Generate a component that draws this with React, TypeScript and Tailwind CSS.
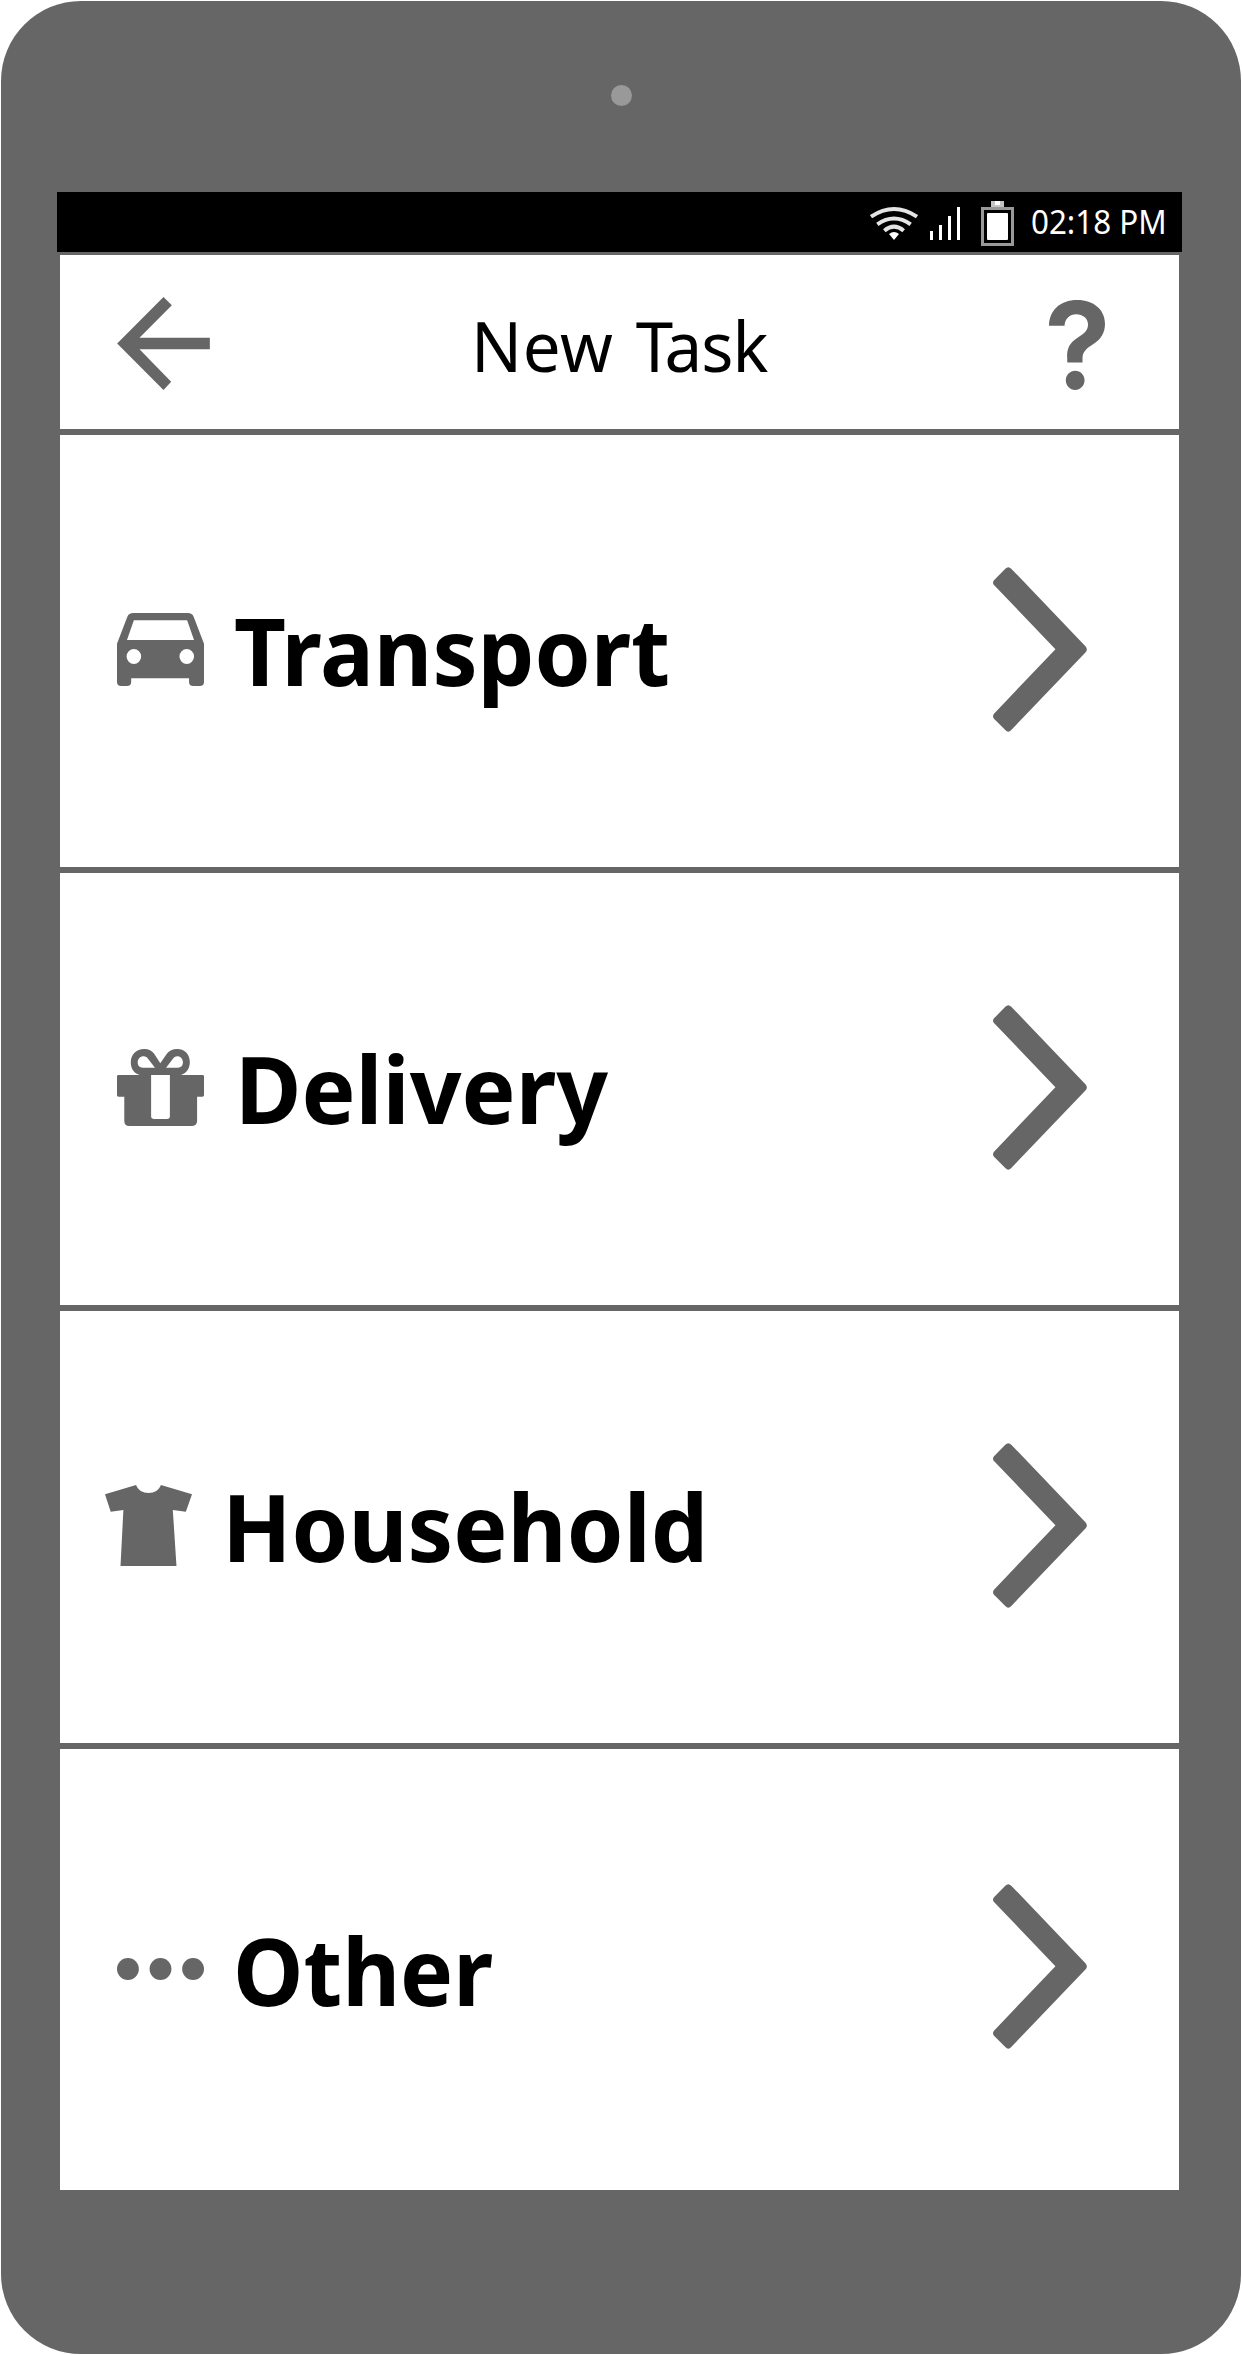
import type { ReactNode } from "react";
import { IoIosHelp } from "react-icons/io";

const CarIcon = () => (
  <svg viewBox="71 99 227 219" preserveAspectRatio="none" className="mt-[178px] h-[73px] w-[87px] shrink-0" fill="#666">
    <path
      fillRule="evenodd"
      d="M71 191L98 110Q102 99 113 99H256Q267 99 271 110L298 191V306Q298 318 287 318H270Q259 318 259 306V295H108V306Q108 318 97 318H82Q71 318 71 306ZM115 121L97 180H272L254 121ZM115 207A19 22.500 0 1 0 115 252A19 22.500 0 1 0 115 207ZM253 207A19 22.500 0 1 0 253 252A19 22.500 0 1 0 253 207Z"
    />
  </svg>
);

const GiftIcon = () => (
  <svg viewBox="71 87 227 231" preserveAspectRatio="none" className="mt-[176px] h-[77px] w-[87px] shrink-0" fill="#666">
    <path
      fillRule="evenodd"
      d="M75 165H130C113 159 107 144 107 127C107 104 121 87 142 87C154 87 162 92 168 101L184 130L201 101C207 92 216 87 228 87C249 87 261 104 261 127C261 144 254 159 238 165H294Q298 165 298 169V226Q298 230 294 230H280V303Q280 318 265 318H103Q90 318 90 303V230H75Q71 230 71 226V169Q71 165 75 165ZM160 165V289Q160 297 168 297H201Q209 297 209 289V165ZM170 143L152 116C148 111 145 109 141 109C131 109 125 117 125 127C125 137 130 143 138 143ZM199 143L217 116C221 111 224 109 228 109C237 109 243 117 243 127C243 137 238 143 230 143Z"
    />
  </svg>
);

const ShirtIcon = () => (
  <svg viewBox="37 75 213 243" preserveAspectRatio="none" className="mt-[174px] h-[81px] w-[87px] shrink-0" fill="#666">
    <path d="M37 103L113 75C118 91 129 99 144 99C158 99 169 91 174 75L250 103L235 155L203 150L212 318H75L82 150L51 155Z" />
  </svg>
);

const DotsIcon = () => (
  <svg viewBox="71 175 227 66" preserveAspectRatio="none" className="mt-[209px] h-[22px] w-[87px] shrink-0" fill="#666">
    <ellipse cx="99.500" cy="208" rx="28.500" ry="33" />
    <ellipse cx="184.500" cy="208" rx="28.500" ry="33" />
    <ellipse cx="269.500" cy="208" rx="28.500" ry="33" />
  </svg>
);

const Chevron = () => (
  <svg viewBox="158 82 283 494" preserveAspectRatio="none" className="h-[165px] w-[94px] shrink-0" fill="#666">
    <path d="M161 122L195 87Q204 78 213 87L437 320Q444 329 437 337L213 570Q204 580 195 570L161 536Q155 529 161 521L346 328L161 136Q155 129 161 122Z" />
  </svg>
);

const StatusBar = () => (
  <div className="flex h-[60px] w-[1125px] items-start bg-black pl-[813px]">
    <svg viewBox="90 72 144 108" className="mt-3 h-9 w-12 shrink-0" fill="none" stroke="#e4e4e4" strokeWidth="12">
      <path d="M93 110Q162 64 231 110" />
      <path d="M112 133Q162 98 212 133" />
      <path d="M133 152Q162 128 191 152" />
      <path d="M147 162Q162 150 177 162L162 180Z" fill="#fff" stroke="none" />
    </svg>
    <svg viewBox="0 0 30 33" className="mt-[15px] ml-3 h-[33px] w-[30px] shrink-0" fill="#fff">
      <path d="M0 24h3v9H0zM9 18h3v15H9zM18 9h3v24h-3zM27 0h3v33h-3z" />
    </svg>
    <svg viewBox="0 0 33 45" className="mt-[9px] ml-[21px] h-[45px] w-[33px] shrink-0">
      <rect x="10" y="0" width="13" height="6" fill="#c4c4c4" />
      <rect x="14" y="0" width="5" height="4" fill="#fff" />
      <rect x="1.500" y="7.500" width="30" height="36" fill="#000" stroke="#999" strokeWidth="3" />
      <rect x="6" y="12" width="21" height="27" rx="1" fill="#fff" />
    </svg>
    <span className="mt-[13px] ml-[17px] origin-left scale-x-[0.95] text-[33px] leading-[33px] whitespace-nowrap text-white">
      02:18 PM
    </span>
  </div>
);

const Header = () => (
  <header className="flex h-[180px] items-start border-b-[6px] border-[#666] bg-white">
    <svg viewBox="232 171 278 279" className="mt-[42px] ml-[57px] h-[93px] w-[93px] shrink-0" fill="#666">
      <path d="M232 310.500L371 171L396 196L299 293H510V328H299L394 425L371 450Z" />
    </svg>
    <h1 className="mt-[55px] ml-[261px] origin-left scale-x-[0.961] text-[70px] leading-[70px] whitespace-nowrap text-black [word-spacing:4px]">
      <span className="tracking-[0.7px]">New </span>
      <span className="tracking-[-9px]">T</span>
      <span className="tracking-[-1px]">ask</span>
    </h1>
    <IoIosHelp
      viewBox="192 160 128 192"
      preserveAspectRatio="none"
      className="mt-[45px] mr-[74px] ml-auto h-[90px] w-[56px] shrink-0 text-[#666]"
    />
  </header>
);

type Row = { label: string; icon: ReactNode; rowClass: string; labelClass: string; chevronClass: string };

const rows: Row[] = [
  { label: "Transport", icon: <CarIcon />, rowClass: "h-[438px] border-b-[6px] pl-[57px]", labelClass: "mt-[168px] ml-[30px] scale-x-[0.958]", chevronClass: "mt-[132px]" },
  { label: "Delivery", icon: <GiftIcon />, rowClass: "h-[438px] border-b-[6px] pl-[57px]", labelClass: "mt-[168px] ml-[31px] scale-x-[0.965]", chevronClass: "mt-[132px]" },
  { label: "Household", icon: <ShirtIcon />, rowClass: "h-[438px] border-b-[6px] pl-[45px]", labelClass: "mt-[168px] ml-[30px] scale-x-[0.968]", chevronClass: "mt-[132px]" },
  { label: "Other", icon: <DotsIcon />, rowClass: "h-[441px] pl-[57px]", labelClass: "mt-[174px] ml-[29px] scale-x-[0.948]", chevronClass: "mt-[135px]" },
];

export default function App() {
  return (
    <div className="h-[2355px] w-[1242px] bg-white p-px font-['Noto_Sans',sans-serif]">
      <div className="flex h-[2353px] w-[1240px] flex-col rounded-[80px] bg-[#666]">
        <div className="flex h-[191px] items-start justify-center">
          <span className="mt-[84px] size-[21px] rounded-full bg-[#999]" />
        </div>
        <div className="pl-14">
          <StatusBar />
        </div>
        <main className="mt-[3px] ml-[59px] flex w-[1119px] flex-col">
          <Header />
          {rows.map((row) => (
            <div key={row.label} className={`flex items-start border-[#666] bg-white pr-[92px] ${row.rowClass}`}>
              {row.icon}
              <span className={`origin-left text-[94px] leading-[94px] font-bold whitespace-nowrap text-black ${row.labelClass}`}>
                {row.label}
              </span>
              <span className={`ml-auto ${row.chevronClass}`}>
                <Chevron />
              </span>
            </div>
          ))}
        </main>
      </div>
    </div>
  );
}
